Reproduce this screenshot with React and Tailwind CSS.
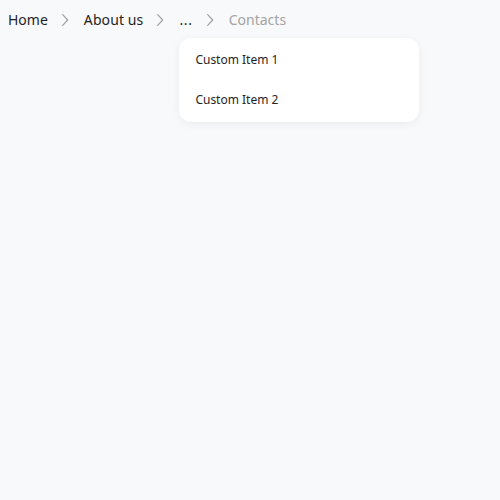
import React from "react";

function Chevron() {
  return (
    <svg className="ml-[9px] mr-[11px] shrink-0" width="16" height="16" viewBox="0 0 24 24" fill="none" stroke="#a0a0a0" strokeWidth="1.8" strokeLinecap="round" strokeLinejoin="round">
      <path d="M8.5 4l7.5 8-7.5 8" />
    </svg>
  );
}

export default function App() {
  return (
    <div className="min-h-[500px] w-[500px] bg-[#f8f9fb] text-[#1f1f1f]" style={{ fontFamily: '"Noto Sans", sans-serif' }}>
      <nav className="flex items-center px-2 py-2 text-sm">
        <span className="h-6 leading-6">Home</span>
        <Chevron />
        <span className="h-6 leading-6 tracking-[0.1px]">About us</span>
        <Chevron />
        <div className="relative">
          <span className="h-6 leading-6 block tracking-[0.7px]">...</span>
          <div className="absolute left-0 top-[30px] w-[240px] rounded-xl bg-white p-0.5 shadow-[0_2px_8px_rgba(0,0,0,0.06)]">
            <div className="h-10 px-[14px] flex items-center text-xs text-[#262626]">Custom Item 1</div>
            <div className="h-10 px-[14px] flex items-center text-xs text-[#262626]">Custom Item 2</div>
          </div>
        </div>
        <Chevron />
        <span className="h-6 leading-6 text-[#a3a3a3]">Contacts</span>
      </nav>
    </div>
  );
}
